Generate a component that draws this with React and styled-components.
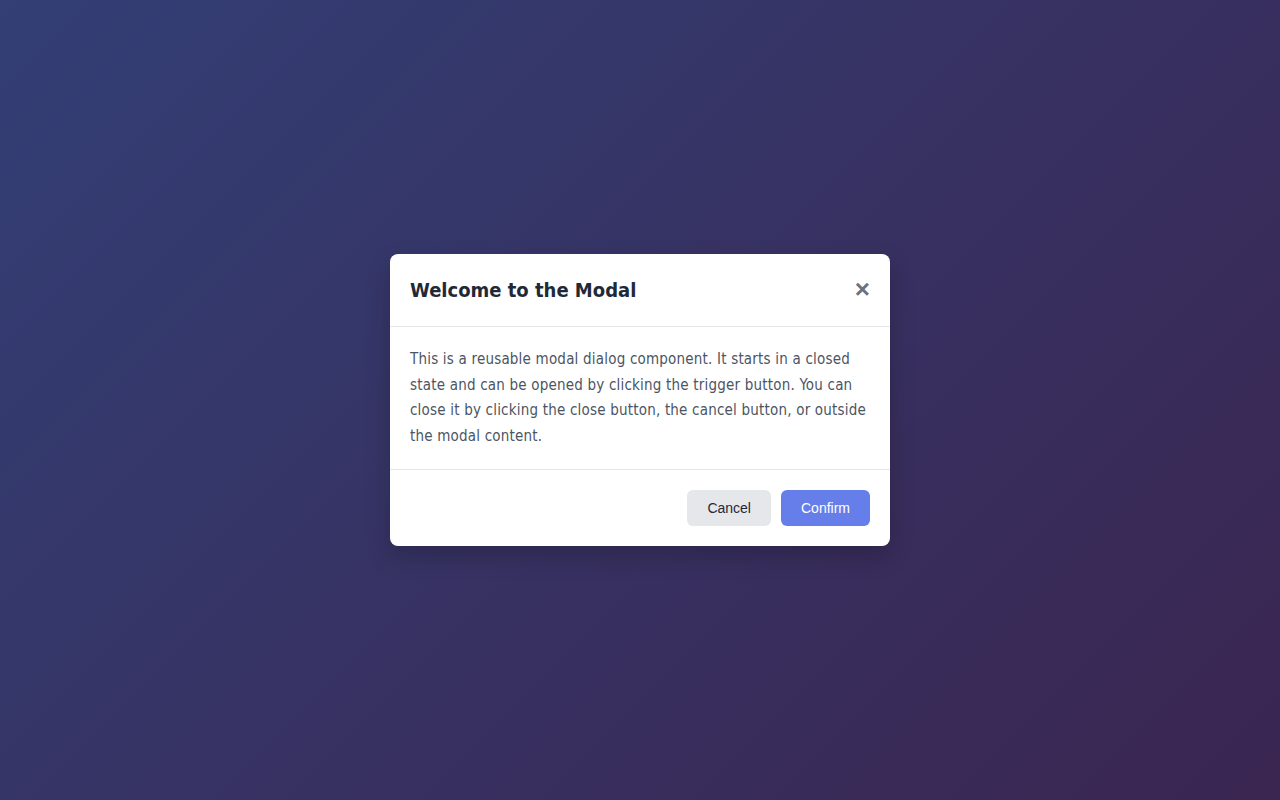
import React from "react";
import styled, { createGlobalStyle } from "styled-components";

const GlobalStyle = createGlobalStyle`
  * { box-sizing: border-box; }
  html, body { margin: 0; padding: 0; height: 100%; }
  body {
    font-family: "DejaVu Sans Condensed", "DejaVu Sans", sans-serif;
    background: linear-gradient(135deg, #667eea 0%, #764ba2 100%);
  }
`;

const Overlay = styled.div`
  display: flex;
  align-items: center;
  justify-content: center;
  width: 100vw;
  height: 100vh;
  background: rgba(0, 0, 0, 0.5);
`;

const Dialog = styled.div`
  width: 500px;
  background: #ffffff;
  border-radius: 8px;
  box-shadow: 0 10px 25px rgba(0, 0, 0, 0.2);
  overflow: hidden;
`;

const Header = styled.div`
  display: flex;
  align-items: center;
  justify-content: space-between;
  padding: 20px;
  border-bottom: 1px solid #e5e7eb;
`;

const Title = styled.h2`
  margin: 0;
  font-size: 20px;
  line-height: 32px;
  font-weight: 700;
  color: #1f2937;
`;

const CloseButton = styled.button`
  border: none;
  background: none;
  padding: 0;
  width: 18px;
  height: 24px;
  margin-top: -3px;
  font-family: "Liberation Sans", Arial, sans-serif;
  font-size: 26px;
  font-weight: 700;
  line-height: 24px;
  text-align: right;
  color: #6b7280;
  cursor: pointer;
`;

const Body = styled.div`
  padding: 20px;
  font-size: 15px;
  letter-spacing: 0.2px;
  line-height: 1.7;
  color: #4b5563;
`;

const Text = styled.p`
  margin: 0;
`;

const Footer = styled.div`
  display: flex;
  justify-content: flex-end;
  gap: 10px;
  padding: 20px;
  border-top: 1px solid #e5e7eb;
`;

const Button = styled.button`
  border: none;
  border-radius: 6px;
  padding: 10px 20px;
  font-family: "Liberation Sans", Arial, sans-serif;
  font-size: 14px;
  line-height: 16px;
  cursor: pointer;
  background: ${(p) => (p.$primary ? "#667eea" : "#e5e7eb")};
  color: ${(p) => (p.$primary ? "#ffffff" : "#1f2937")};
`;

export default function App() {
  return (
    <>
      <GlobalStyle />
      <Overlay>
        <Dialog>
          <Header>
            <Title>Welcome to the Modal</Title>
            <CloseButton aria-label="Close">×</CloseButton>
          </Header>
          <Body>
            <Text>
              This is a reusable modal dialog component. It starts in a closed
              state and can be opened by clicking the trigger button. You can
              close it by clicking the close button, the cancel button, or
              outside the modal content.
            </Text>
          </Body>
          <Footer>
            <Button>Cancel</Button>
            <Button $primary>Confirm</Button>
          </Footer>
        </Dialog>
      </Overlay>
    </>
  );
}
